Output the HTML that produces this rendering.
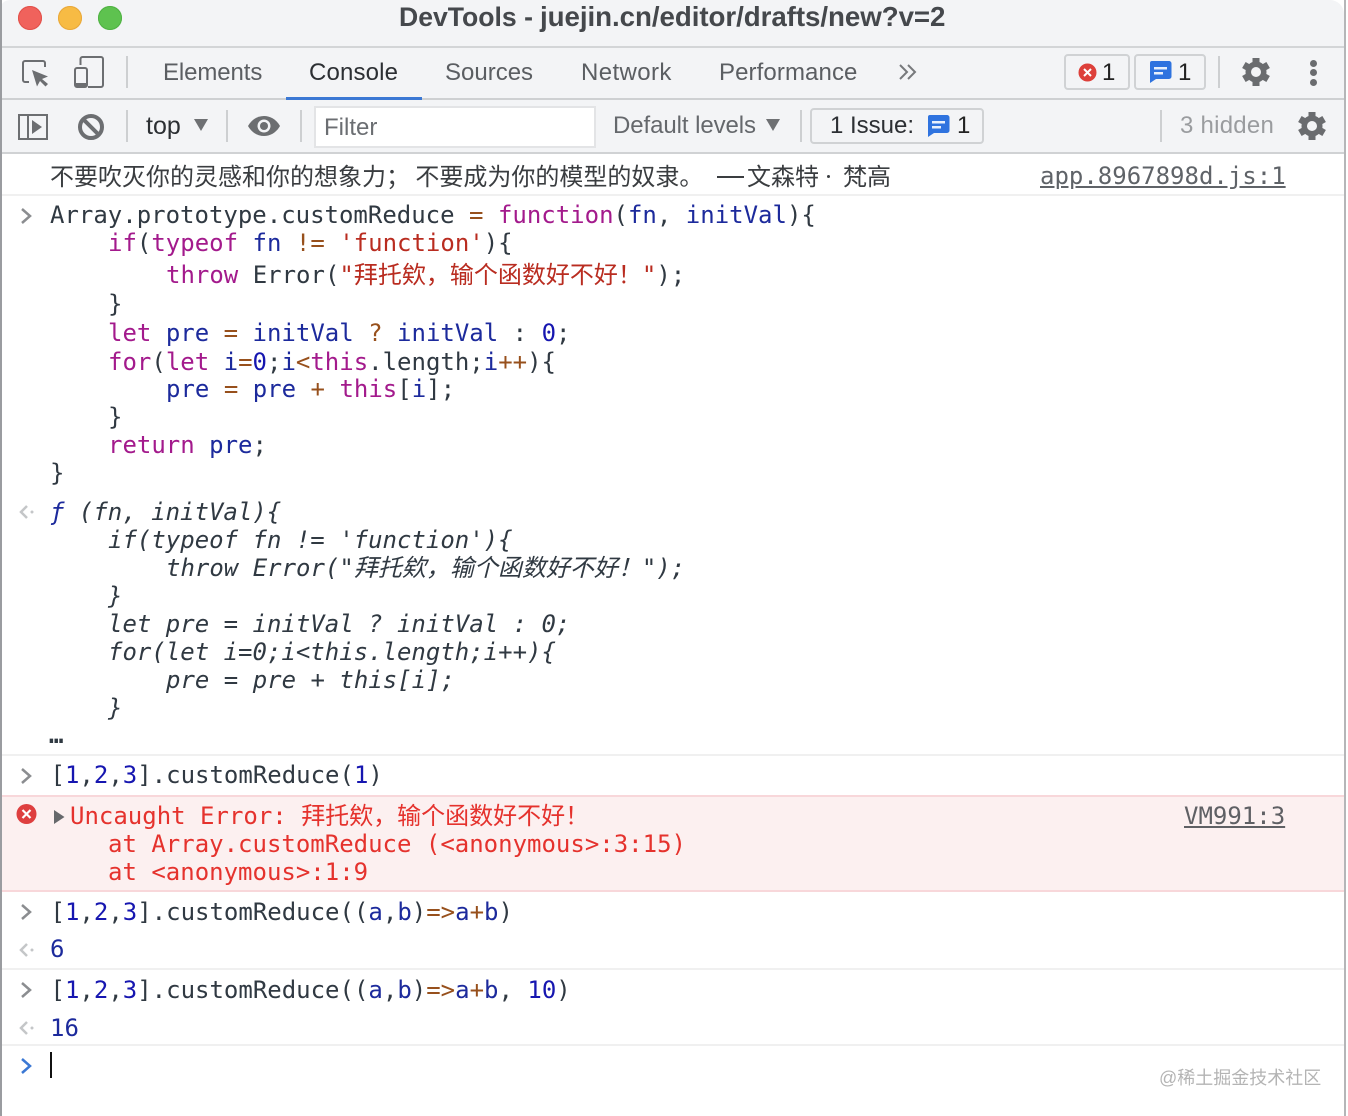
<!DOCTYPE html>
<html><head><meta charset="utf-8"><style>
html,body{margin:0;padding:0;background:#fff}
#p{position:relative;width:1348px;height:1116px;overflow:hidden;background:#fff}
.a{position:absolute}
.s{position:absolute;font:24px/28px "Liberation Sans","Noto Sans CJK SC",sans-serif;white-space:pre;color:#5b5e62}
.l{position:absolute;font:24px/28px "DejaVu Sans Mono","Noto Sans CJK SC",monospace;white-space:pre;color:#303942}
.c{font-family:"Noto Sans CJK SC",sans-serif;color:#3a3d40}
.i{font-style:italic}
.k{color:#a31a8c}.v{color:#1c2a9c}.o{color:#97501c}.t{color:#b92c20}.n{color:#1616b0}
.e{color:#e5322d}
.r{position:absolute;left:2px;width:1342px;height:2px;background:#f0f0f0}
svg{position:absolute;overflow:visible}
.b{position:absolute;border:2px solid #d0d2d4;border-radius:4px;box-sizing:border-box}
.d{position:absolute;width:2px;background:#cdcfd1}
</style></head><body><div id="p">
<div class="a" style="left:0;top:0;width:1344px;height:152px;background:#f3f4f6;border-radius:10px 14px 0 0"></div>
<div class="a" style="left:0;top:0;width:2px;height:1116px;background:#9a9ca0"></div>
<div class="a" style="left:1344px;top:0;width:2px;height:1116px;background:#b5b6b8"></div>
<div class="a" style="left:2px;top:46px;width:1342px;height:2px;background:#d3d5d7"></div>
<div class="a" style="left:2px;top:98px;width:1342px;height:2px;background:#ced0d2"></div>
<div class="a" style="left:2px;top:152px;width:1342px;height:2px;background:#d0d2d4"></div>
<div class="a" style="left:286px;top:97px;width:136px;height:3px;background:#3b78d4"></div>

<div class="a" style="left:18px;top:6px;width:24px;height:24px;border-radius:50%;background:#f0625c;box-shadow:inset 0 0 0 1px #e2504a"></div>
<div class="a" style="left:58px;top:6px;width:24px;height:24px;border-radius:50%;background:#f7bb44;box-shadow:inset 0 0 0 1px #e9a83a"></div>
<div class="a" style="left:98px;top:6px;width:24px;height:24px;border-radius:50%;background:#5ec24f;box-shadow:inset 0 0 0 1px #4fb243"></div>
<div class="s" style="left:399px;top:3px;font-weight:bold;font-size:26.6px;color:#45484c">DevTools -</div>
<div class="s" style="left:540px;top:3px;font-weight:bold;font-size:27.7px;color:#45484c;letter-spacing:-.05px">juejin.cn/editor/drafts/new?v=2</div>

<svg style="left:0;top:45px" width="120" height="110" viewBox="0 0 120 110">
<path d="M29 37H25a2 2 0 0 1-2-2V18a2 2 0 0 1 2-2h18a2 2 0 0 1 2 2v4" fill="none" stroke="#6c6e71" stroke-width="2"/>
<path d="M32 25L48 31.500l-6 2.500 6 5-2.500 2.500-5.500-5.500-3 5.500z" fill="#6c6e71"/>
<path d="M80.500 20V14a2 2 0 0 1 2-2h18.500a2 2 0 0 1 2 2v26a2 2 0 0 1-2 2H88" fill="none" stroke="#6c6e71" stroke-width="2"/>
<rect x="75" y="23" width="12" height="19" rx="2" fill="#f3f4f6" stroke="#6c6e71" stroke-width="2"/>
<rect x="75" y="38" width="12" height="4" fill="#6c6e71"/>
<rect x="19" y="70" width="28" height="24" fill="none" stroke="#6c6e71" stroke-width="2"/>
<rect x="27" y="70" width="2" height="24" fill="#6c6e71"/>
<path d="M32 75l10 7-10 7z" fill="#6c6e71"/>
<circle cx="91" cy="82" r="11" fill="none" stroke="#6c6e71" stroke-width="4"/>
<path d="M83 74l16 16" stroke="#6c6e71" stroke-width="4"/>
</svg>
<div class="d" style="left:126px;top:56px;height:32px"></div>
<div class="d" style="left:126px;top:110px;height:32px"></div>
<div class="d" style="left:226px;top:110px;height:32px"></div>
<div class="d" style="left:300px;top:110px;height:32px"></div>
<div class="d" style="left:800px;top:110px;height:32px"></div>
<div class="d" style="left:1160px;top:110px;height:32px"></div>
<div class="d" style="left:1218px;top:56px;height:32px"></div>

<div class="s" style="left:163px;top:59px;letter-spacing:-.1px">Elements</div>
<div class="s" style="left:309px;top:59px;color:#2c2f33;letter-spacing:.15px">Console</div>
<div class="s" style="left:445px;top:59px">Sources</div>
<div class="s" style="left:581px;top:59px;letter-spacing:.4px">Network</div>
<div class="s" style="left:719px;top:59px;letter-spacing:.1px">Performance</div>
<svg style="left:898px;top:62px" width="22" height="20"><path d="M2 3l7 7-7 7M10 3l7 7-7 7" fill="none" stroke="#77797c" stroke-width="2"/></svg>

<div class="b" style="left:1064px;top:54px;width:66px;height:36px"></div>
<div class="b" style="left:1134px;top:54px;width:72px;height:36px"></div>
<svg style="left:1078px;top:63px" width="20" height="20"><circle cx="9.500" cy="9.500" r="9" fill="#dd403a"/><path d="M6 6l7 7M13 6l-7 7" stroke="#fff" stroke-width="2"/></svg>
<div class="s" style="left:1102px;top:59px;color:#222">1</div>
<svg style="left:1149px;top:60px" width="24" height="24"><path d="M3 1h17a2.500 2.500 0 0 1 2.500 2.500v13a2.500 2.500 0 0 1-2.500 2.500H7l-6 4V3a2 2 0 0 1 2-2z" fill="#2f73df"/><path d="M5 7h13v2.500H5zM5 12h9v2.500H5z" fill="#e8f0fc"/></svg>
<div class="s" style="left:1178px;top:59px;color:#222">1</div>

<svg style="left:1241px;top:57px" width="30" height="30" viewBox="0 0 30 30"><g fill="#6a6c6f"><circle cx="15" cy="15" r="10.500"/><rect x="11.500" y="1" width="7" height="6"/><rect x="11.500" y="23" width="7" height="6"/><rect x="11.500" y="1" width="7" height="6" transform="rotate(60 15 15)"/><rect x="11.500" y="23" width="7" height="6" transform="rotate(60 15 15)"/><rect x="11.500" y="1" width="7" height="6" transform="rotate(120 15 15)"/><rect x="11.500" y="23" width="7" height="6" transform="rotate(120 15 15)"/></g><circle cx="15" cy="15" r="5" fill="#f3f4f6"/></svg>
<div class="a" style="left:1310px;top:60px;width:7px;height:7px;border-radius:50%;background:#6a6c6f"></div>
<div class="a" style="left:1310px;top:69px;width:7px;height:7px;border-radius:50%;background:#6a6c6f"></div>
<div class="a" style="left:1310px;top:79px;width:7px;height:7px;border-radius:50%;background:#6a6c6f"></div>

<div class="s" style="left:146px;top:112px;color:#2c2f33;font-size:25px">top</div>
<svg style="left:194px;top:119px" width="14" height="13"><path d="M0 0h14l-7 12z" fill="#6e7073"/></svg>
<svg style="left:248px;top:114px" width="32" height="24" viewBox="0 0 32 24"><path d="M0 12C4 5 10 2 16 2s12 3 16 10c-4 7-10 10-16 10S4 19 0 12z" fill="#6c6e71"/><circle cx="16" cy="12" r="6.500" fill="#f3f4f6"/><circle cx="16" cy="12" r="4" fill="#6c6e71"/></svg>
<div class="a" style="left:314px;top:106px;width:282px;height:42px;background:#fff;border:2px solid #e3e4e6;box-sizing:border-box"></div>
<div class="s" style="left:324px;top:114px;color:#6b6e72">Filter</div>
<div class="s" style="left:613px;top:112px;color:#65686c;letter-spacing:-.08px">Default levels</div>
<svg style="left:766px;top:119px" width="14" height="13"><path d="M0 0h14l-7 12z" fill="#6e7073"/></svg>
<div class="b" style="left:810px;top:108px;width:174px;height:36px"></div>
<div class="s" style="left:830px;top:112px;color:#2c2f33">1 Issue:</div>
<svg style="left:927px;top:114px" width="24" height="24"><path d="M3 1h17a2.500 2.500 0 0 1 2.500 2.500v13a2.500 2.500 0 0 1-2.500 2.500H7l-6 4V3a2 2 0 0 1 2-2z" fill="#2f73df"/><path d="M5 7h13v2.500H5zM5 12h9v2.500H5z" fill="#e8f0fc"/></svg>
<div class="s" style="left:957px;top:112px;color:#222">1</div>
<div class="s" style="left:1180px;top:112px;color:#9a9c9f;letter-spacing:.25px">3 hidden</div>
<svg style="left:1297px;top:111px" width="30" height="30" viewBox="0 0 30 30"><g fill="#6a6c6f"><circle cx="15" cy="15" r="10.500"/><rect x="11.500" y="1" width="7" height="6"/><rect x="11.500" y="23" width="7" height="6"/><rect x="11.500" y="1" width="7" height="6" transform="rotate(60 15 15)"/><rect x="11.500" y="23" width="7" height="6" transform="rotate(60 15 15)"/><rect x="11.500" y="1" width="7" height="6" transform="rotate(120 15 15)"/><rect x="11.500" y="23" width="7" height="6" transform="rotate(120 15 15)"/></g><circle cx="15" cy="15" r="5" fill="#f3f4f6"/></svg>

<div class="l c" style="left:50px;top:161px">不要吹灭你的灵感和你的想象力； 不要成为你的模型的奴隶。</div>
<div class="a" style="left:717px;top:176px;width:27px;height:2px;background:#3a3d40"></div>
<div class="l c" style="left:747px;top:161px">文森特</div>
<div class="a" style="left:827px;top:175px;width:3px;height:3px;border-radius:50%;background:#3a3d40"></div>
<div class="l c" style="left:843px;top:161px">梵高</div>
<div class="l" style="left:1040px;top:162px;color:#5f6368;text-decoration:underline">app.8967898d.js:1</div>
<div class="r" style="top:194px"></div>

<svg style="left:20px;top:207px" width="14" height="18"><path d="M2 2l8 7-8 7" fill="none" stroke="#8b8d90" stroke-width="2.500"/></svg>
<div class="l" style="left:50px;top:201px">Array.prototype.customReduce <span class="o">=</span> <span class="k">function</span>(<span class="v">fn</span>, <span class="v">initVal</span>){</div>
<div class="l" style="left:108px;top:229px"><span class="k">if</span>(<span class="k">typeof</span> <span class="v">fn</span> <span class="o">!=</span> <span class="t">'function'</span>){</div>
<div class="l" style="left:166px;top:261px"><span class="k">throw</span> Error(<span class="t">"拜托欸，输个函数好不好！"</span>);</div>
<div class="l" style="left:108px;top:290px">}</div>
<div class="l" style="left:108px;top:319px"><span class="k">let</span> <span class="v">pre</span> <span class="o">=</span> <span class="v">initVal</span> <span class="o">?</span> <span class="v">initVal</span> : <span class="n">0</span>;</div>
<div class="l" style="left:108px;top:348px"><span class="k">for</span>(<span class="k">let</span> <span class="v">i</span><span class="o">=</span><span class="n">0</span>;<span class="v">i</span><span class="o">&lt;</span><span class="k">this</span>.length;<span class="v">i</span><span class="o">++</span>){</div>
<div class="l" style="left:166px;top:375px"><span class="v">pre</span> <span class="o">=</span> <span class="v">pre</span> <span class="o">+</span> <span class="k">this</span>[<span class="v">i</span>];</div>
<div class="l" style="left:108px;top:403px">}</div>
<div class="l" style="left:108px;top:431px"><span class="k">return</span> <span class="v">pre</span>;</div>
<div class="l" style="left:50px;top:459px">}</div>

<svg style="left:18px;top:504px" width="18" height="16"><path d="M9 2L3 8l6 6" fill="none" stroke="#c4c6c8" stroke-width="2.500"/><circle cx="14" cy="8" r="1.500" fill="#c4c6c8"/></svg>
<div class="l i" style="left:50px;top:498px"><span class="v">ƒ</span> (fn, initVal){</div>
<div class="l i" style="left:108px;top:526px">if(typeof fn != 'function'){</div>
<div class="l i" style="left:166px;top:554px">throw Error("拜托欸，输个函数好不好！");</div>
<div class="l i" style="left:108px;top:582px">}</div>
<div class="l i" style="left:108px;top:610px">let pre = initVal ? initVal : 0;</div>
<div class="l i" style="left:108px;top:638px">for(let i=0;i&lt;this.length;i++){</div>
<div class="l i" style="left:166px;top:666px">pre = pre + this[i];</div>
<div class="l i" style="left:108px;top:694px">}</div>
<div class="l" style="left:49px;top:721px;font-weight:bold">…</div>
<div class="r" style="top:754px"></div>

<svg style="left:20px;top:767px" width="14" height="18"><path d="M2 2l8 7-8 7" fill="none" stroke="#8b8d90" stroke-width="2.500"/></svg>
<div class="l" style="left:50.500px;top:761px">[<span class="n">1</span>,<span class="n">2</span>,<span class="n">3</span>].customReduce(<span class="n">1</span>)</div>

<div class="a" style="left:2px;top:795px;width:1342px;height:97px;background:#fcf0f0;border-top:2px solid #f8d7da;border-bottom:2px solid #f8d7da;box-sizing:border-box"></div>
<svg style="left:16px;top:804px" width="21" height="21"><circle cx="10.500" cy="10" r="10" fill="#de3f3f"/><path d="M6.500 6l8 8M14.500 6l-8 8" stroke="#fff" stroke-width="2.200"/></svg>
<svg style="left:54px;top:810px" width="11" height="14"><path d="M0 0l10.500 7L0 14z" fill="#66686b"/></svg>
<div class="l e" style="left:70px;top:802px">Uncaught Error: 拜托欸，输个函数好不好！</div>
<div class="l e" style="left:108px;top:830px">at Array.customReduce (&lt;anonymous&gt;:3:15)</div>
<div class="l e" style="left:108px;top:858px">at &lt;anonymous&gt;:1:9</div>
<div class="l" style="left:1184px;top:802px;color:#5f6064;text-decoration:underline">VM991:3</div>

<svg style="left:20px;top:903px" width="14" height="18"><path d="M2 2l8 7-8 7" fill="none" stroke="#8b8d90" stroke-width="2.500"/></svg>
<div class="l" style="left:50.500px;top:898px">[<span class="n">1</span>,<span class="n">2</span>,<span class="n">3</span>].customReduce((<span class="v">a</span>,<span class="v">b</span>)<span class="o">=&gt;</span><span class="v">a</span><span class="o">+</span><span class="v">b</span>)</div>
<svg style="left:18px;top:942px" width="18" height="16"><path d="M9 2L3 8l6 6" fill="none" stroke="#c4c6c8" stroke-width="2.500"/><circle cx="14" cy="8" r="1.500" fill="#c4c6c8"/></svg>
<div class="l v" style="left:50px;top:935px">6</div>
<div class="r" style="top:968px"></div>

<svg style="left:20px;top:981px" width="14" height="18"><path d="M2 2l8 7-8 7" fill="none" stroke="#8b8d90" stroke-width="2.500"/></svg>
<div class="l" style="left:50.500px;top:976px">[<span class="n">1</span>,<span class="n">2</span>,<span class="n">3</span>].customReduce((<span class="v">a</span>,<span class="v">b</span>)<span class="o">=&gt;</span><span class="v">a</span><span class="o">+</span><span class="v">b</span>, <span class="n">10</span>)</div>
<svg style="left:18px;top:1020px" width="18" height="16"><path d="M9 2L3 8l6 6" fill="none" stroke="#c4c6c8" stroke-width="2.500"/><circle cx="14" cy="8" r="1.500" fill="#c4c6c8"/></svg>
<div class="l v" style="left:50px;top:1014px">16</div>
<div class="r" style="top:1044px"></div>

<svg style="left:20px;top:1057px" width="14" height="18"><path d="M2 2l8 7-8 7" fill="none" stroke="#3b78d4" stroke-width="2.500"/></svg>
<div class="a" style="left:50px;top:1052px;width:2px;height:26px;background:#111"></div>
<div class="s" style="left:1159px;top:1064px;font-size:18px;color:#b4b4b4">@稀土掘金技术社区</div>
</div></body></html>
